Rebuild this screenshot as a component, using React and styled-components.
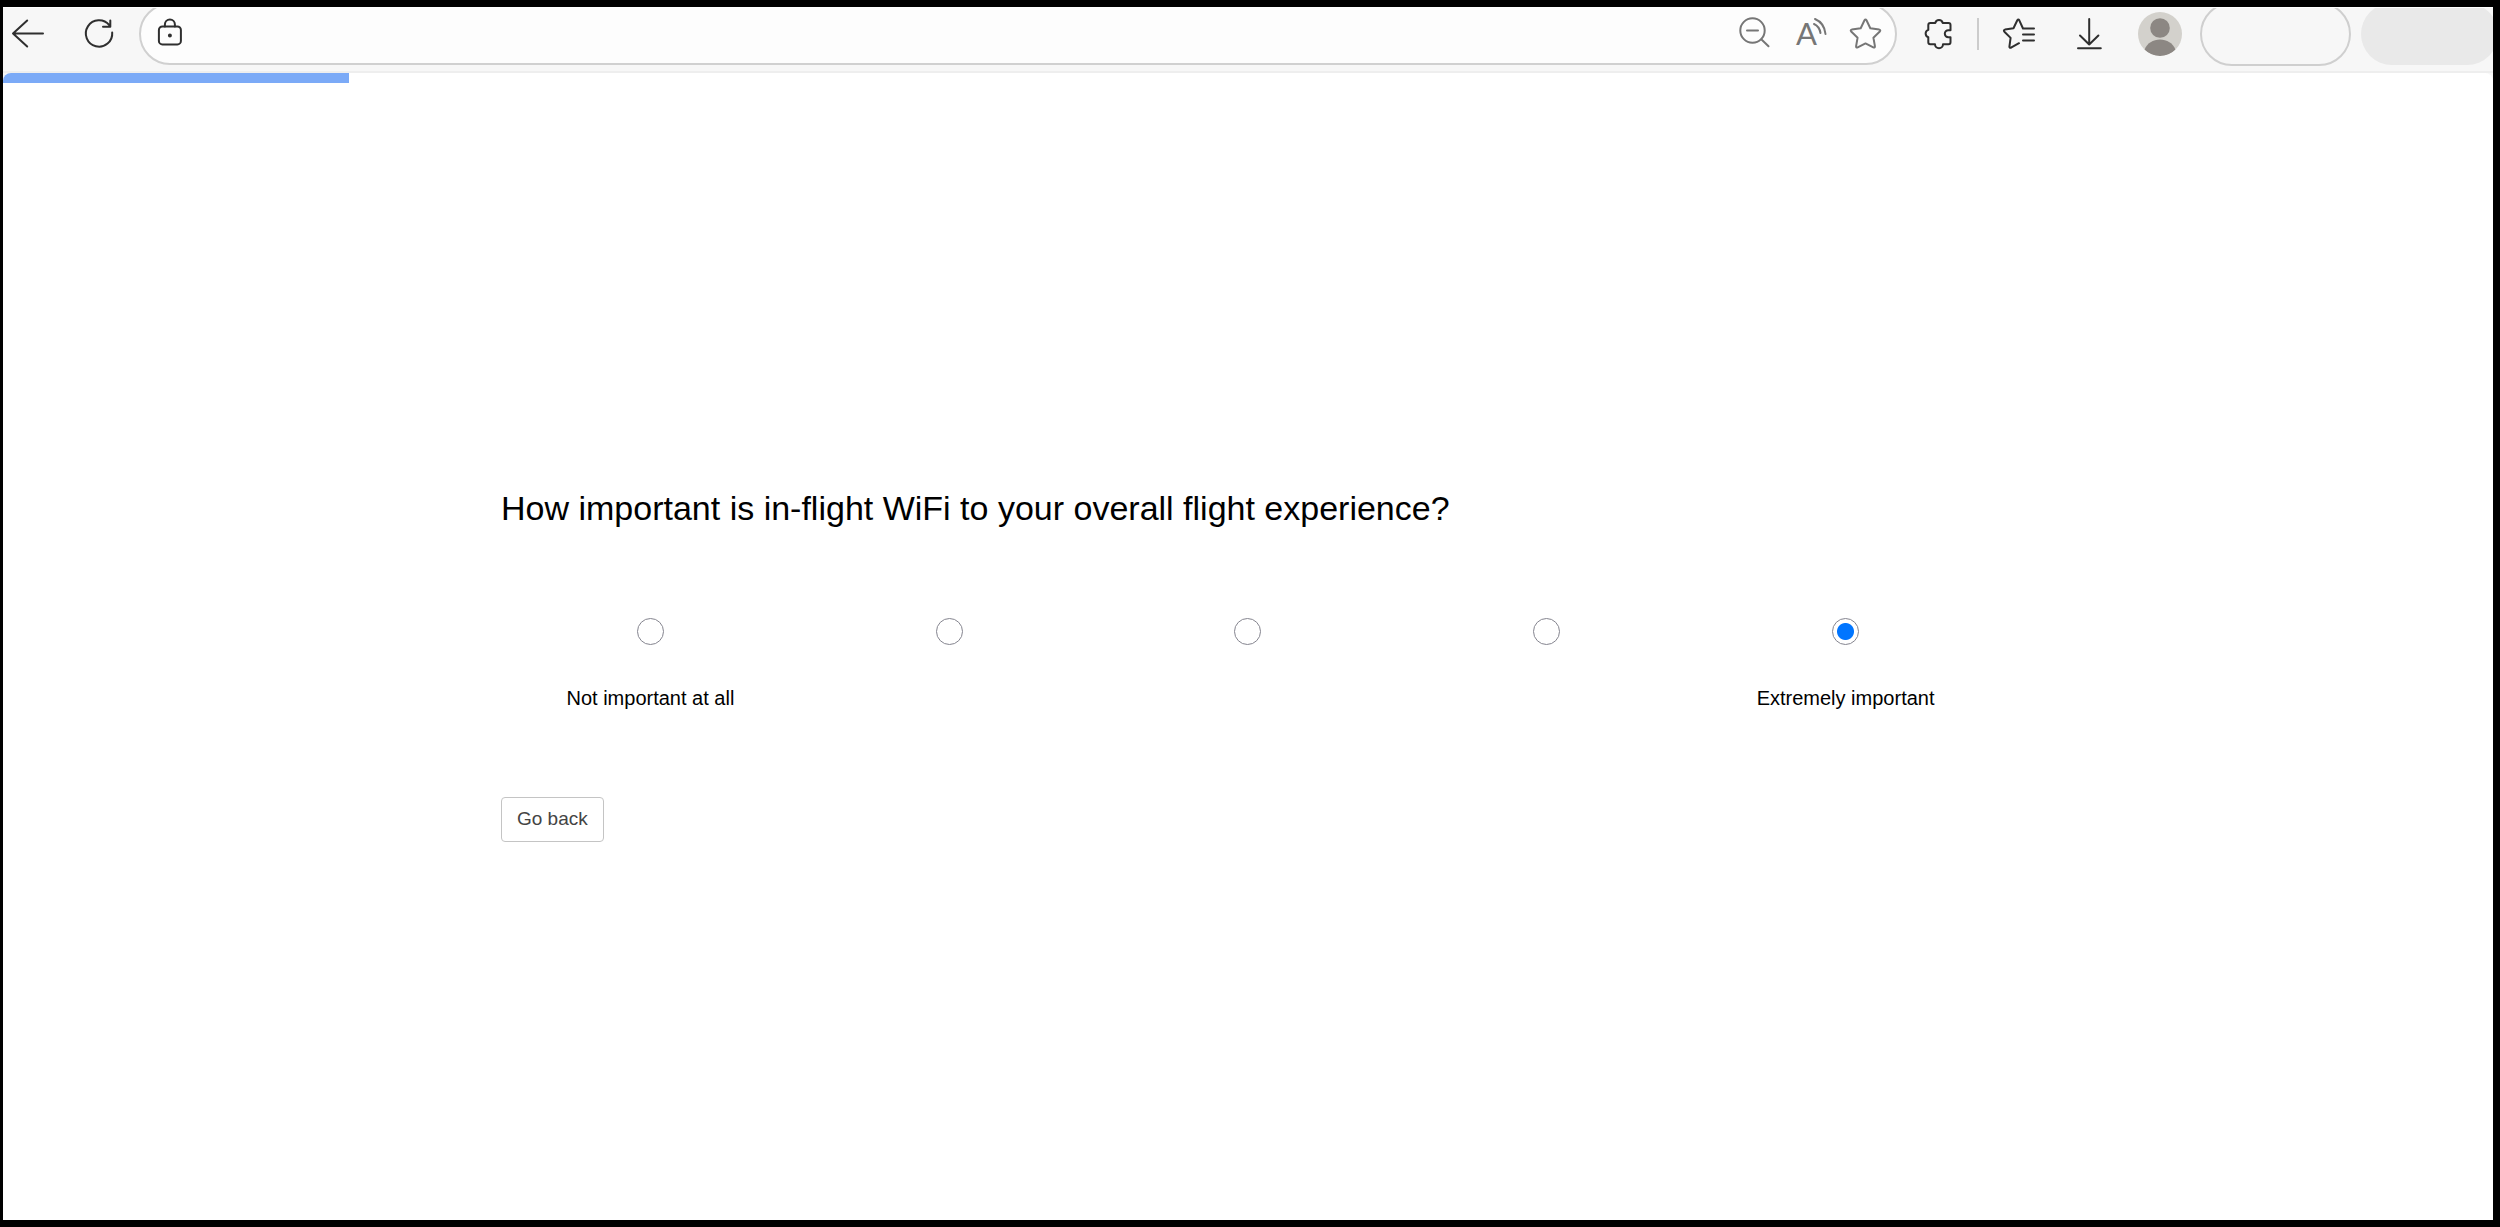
import { useState } from "react";
import styled, { createGlobalStyle } from "styled-components";

const GlobalStyle = createGlobalStyle`
  * {
    box-sizing: border-box;
  }

  body {
    margin: 0;
    background-color: black;
    font-family: "Liberation Sans", Arial, sans-serif;
  }
`;

const Window = styled.div`
  min-height: 100vh;
  display: flex;
  flex-direction: column;
  border: 7px solid black;
  border-left-width: 3px;
  background-color: #f7f7f7;
`;

const Toolbar = styled.header`
  height: 66px;
  display: flex;
  align-items: center;
  gap: 24px;
  padding: 0 0 11px 9px;
  border-top: 1px solid white;
  border-bottom: 2px solid #eeeeee;
  overflow: hidden;
`;

const Group = styled.div`
  display: flex;
  align-items: center;
  flex: none;
  gap: ${(props) => props.$gap}px;
`;

const IconButton = styled.button`
  width: 32px;
  height: 32px;
  flex: none;
  padding: 0;
  border: none;
  background: none;
  color: ${(props) => (props.$muted ? "#767676" : "#2f2f2f")};
  cursor: pointer;
`;

const Icon = styled.svg`
  display: block;
  width: 32px;
  height: 32px;
  fill: none;
  stroke: currentColor;
  stroke-width: 2;
  stroke-linecap: round;
  stroke-linejoin: round;
  overflow: visible;
`;

const AddressBar = styled.div`
  flex: 1;
  height: 62px;
  display: flex;
  align-items: center;
  gap: 23px;
  padding: 0 13px;
  border: 2px solid #d0d0d0;
  border-radius: 31px;
  background-color: #fdfdfd;
`;

const AddressInput = styled.input`
  flex: 1;
  min-width: 0;
  height: 40px;
  border: none;
  background: none;
  font-size: 20px;

  &:focus {
    outline: none;
  }
`;

const Separator = styled.div`
  width: 2px;
  height: 32px;
  background-color: #cccccc;
`;

const Profile = styled.button`
  width: 44px;
  height: 44px;
  margin: 0 8px 0 -5px;
  padding: 0;
  border: none;
  border-radius: 50%;
  background-color: #d3d1cc;
  overflow: hidden;
`;

const Pills = styled.div`
  display: flex;
  flex: none;
  gap: 10px;
  margin: 0 -5px 0 -14px;
`;

const Pill = styled.button`
  width: ${(props) => (props.$filled ? 137 : 151)}px;
  height: ${(props) => (props.$filled ? 62 : 64)}px;
  align-self: center;
  border: ${(props) => (props.$filled ? "none" : "2px solid #cfcfcf")};
  border-radius: 32px;
  background-color: ${(props) => (props.$filled ? "#e9e9e9" : "transparent")};
`;

const Page = styled.main`
  flex: 1;
  display: flex;
  flex-direction: column;
  border-radius: 8px 8px 0 0;
  background-color: white;
  overflow: hidden;
`;

const Progress = styled.div`
  height: 10px;
`;

const ProgressBar = styled.div`
  height: 100%;
  background-color: #7baaf7;
`;

const Content = styled.div`
  flex: 1;
  display: flex;
  justify-content: center;
  align-items: center;
`;

const Survey = styled.form`
  width: 60%;
  padding-top: 24px;
`;

const Question = styled.h1`
  margin: 0 0 88px;
  font-size: 34px;
  font-weight: normal;
  line-height: 44px;
`;

const Scale = styled.div`
  display: flex;
  margin-bottom: 87px;
`;

const Option = styled.label`
  flex: 1;
  display: flex;
  flex-direction: column;
  align-items: center;
  gap: 41px;
  cursor: pointer;
`;

const Radio = styled.input`
  appearance: none;
  width: 27px;
  height: 27px;
  margin: 0;
  border: 1px solid #85858f;
  border-radius: 50%;
  background-color: white;

  &:checked {
    background-image: radial-gradient(circle, #0075ff 8px, transparent 9px);
  }
`;

const OptionText = styled.span`
  height: 24px;
  font-size: 20px;
  line-height: 24px;
`;

const BackButton = styled.button`
  height: 45px;
  padding: 0 15px;
  border: 1px solid #c4c4c4;
  border-radius: 4px;
  background-color: white;
  color: #444444;
  font-family: inherit;
  font-size: 19px;
  cursor: pointer;
`;

const options = ["Not important at all", "", "", "", "Extremely important"];

const App = () => {
  const [answer, setAnswer] = useState(4);
  const [address, setAddress] = useState("");
  const progress = 13.9;

  return (
    <Window>
      <GlobalStyle />
      <Toolbar>
        <Group $gap={39}>
          <IconButton aria-label="Back">
            <Icon viewBox="0 0 32 32">
              <path d="M31 15.5H1M15.2 2.5L1 15.5l14.2 13" />
            </Icon>
          </IconButton>
          <IconButton aria-label="Refresh">
            <Icon viewBox="0 0 32 32">
              <path d="M29.2 14.5A13.2 13.2 0 1 1 26.3 7.2M27.3 2.5v6.3H20" />
            </Icon>
          </IconButton>
        </Group>
        <AddressBar>
          <IconButton aria-label="Site information">
            <Icon viewBox="0 0 32 32">
              <rect x="4.9" y="8.4" width="22" height="18" rx="3.5" />
              <path d="M10.9 8.4V6.6a5 5 0 0 1 10 0v1.8" />
              <circle cx="15.9" cy="17.5" r="1" />
            </Icon>
          </IconButton>
          <AddressInput
            aria-label="Address"
            value={address}
            onChange={(e) => setAddress(e.target.value)}
          />
          <IconButton $muted aria-label="Zoom out">
            <Icon viewBox="0 0 32 32">
              <circle cx="12.5" cy="12.5" r="12.2" />
              <path d="M7 12.5h11M21.5 21.5l7 6.7" />
            </Icon>
          </IconButton>
          <IconButton $muted aria-label="Read aloud">
            <Icon viewBox="0 0 32 32">
              <text
                x="11.5"
                y="27"
                textAnchor="middle"
                fontFamily="Lato"
                fontWeight="400"
                fontSize="31"
                fill="currentColor"
                stroke="none"
              >
                A
              </text>
              <path d="M19 6Q24.5 8.5 25.5 15M20 1Q29.500 5 30.500 16" />
            </Icon>
          </IconButton>
          <IconButton $muted aria-label="Add to favorites">
            <Icon viewBox="0 0 32 32">
              <path d="M14.500 2.300Q15.500 .7 16.500 2.300L20.300 10.200L29.200 11.600Q31 12.200 29.800 13.500L23.400 19.700L24.900 28.200Q25 30 23.300 29.400L15.500 25.400L7.700 29.400Q6 30 6.100 28.200L7.600 19.700L1.200 13.500Q0 12.200 1.800 11.600L10.700 10.200Z" />
            </Icon>
          </IconButton>
        </AddressBar>
        <IconButton aria-label="Extensions">
          <Icon viewBox="0 0 32 32">
            <path d="M9.300 5H14.300A3.800 3.800 0 0 1 21.700 5H27.500Q29.500 5 29.500 7V12.200H27.300A3.500 3.500 0 0 0 27.300 19.200H29.500V24.200Q29.500 26.200 27.500 26.200H22A4 4 0 0 1 14 26.200H9.300Q7.300 26.200 7.300 24.200V19.300A3.900 3.900 0 0 1 7.300 11.900V7Q7.300 5 9.300 5Z" />
          </Icon>
        </IconButton>
        <Separator />
        <Group $gap={38}>
          <IconButton aria-label="Favorites">
            <Icon viewBox="0 0 32 32">
              <path d="M31 10.500H20L16.300 2.300Q15.300 .6 14.300 2.300L10.500 10.200L2 11.600Q.2 12.200 1.400 13.700L7.600 19.900L6.400 28.600Q6.400 30.300 8 29.700L16 25.200M20 16.500H31M20 22.500H31" />
            </Icon>
          </IconButton>
          <IconButton aria-label="Downloads">
            <Icon viewBox="0 0 32 32">
              <path d="M16.200 1V26.500M7 17.500l9.200 9 9.200-9M5 30.300H27.800" />
            </Icon>
          </IconButton>
          <Profile aria-label="Profile">
            <svg viewBox="0 0 44 44" width="44" height="44" fill="#8c8783">
              <circle cx="22" cy="16" r="9.800" />
              <path d="M6.500 38C11 24 33 24 37.500 38Q31 44 22 44T6.500 38Z" />
            </svg>
          </Profile>
        </Group>
        <Pills>
          <Pill aria-label="Account" />
          <Pill $filled aria-label="Assistant" />
        </Pills>
      </Toolbar>
      <Page>
        <Progress>
          <ProgressBar style={{ width: `${progress}%` }} />
        </Progress>
        <Content>
          <Survey onSubmit={(e) => e.preventDefault()}>
            <Question id="question">
              How important is in-flight WiFi to your overall flight experience?
            </Question>
            <Scale role="radiogroup" aria-labelledby="question">
              {options.map((text, i) => (
                <Option key={i}>
                  <Radio
                    type="radio"
                    name="importance"
                    aria-label={text || `${i + 1} of ${options.length}`}
                    checked={answer === i}
                    onChange={() => setAnswer(i)}
                  />
                  <OptionText>{text}</OptionText>
                </Option>
              ))}
            </Scale>
            <BackButton type="button">Go back</BackButton>
          </Survey>
        </Content>
      </Page>
    </Window>
  );
};

export default App;
